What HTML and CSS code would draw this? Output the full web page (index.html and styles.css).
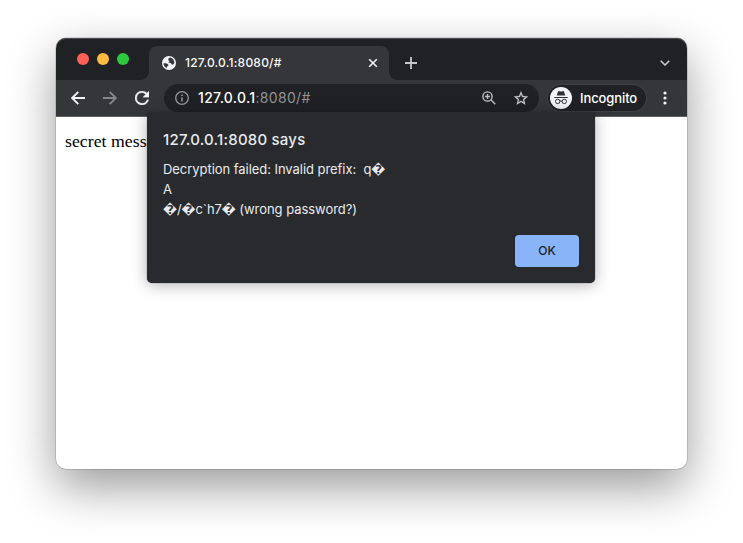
FILE: index.html
```html
<!DOCTYPE html>
<html lang="en">
<head>
<meta charset="utf-8">
<title>127.0.0.1:8080/#</title>
<link rel="stylesheet" href="styles.css">
</head>
<body>
<div class="window">
  <div class="tabstrip">
    <div class="lights"><i class="red"></i><i class="yellow"></i><i class="green"></i></div>
    <div class="tab">
      <svg class="globe" viewBox="0 0 14 14"><circle cx="7" cy="7" r="7" fill="#f4f5f6"/><path d="M8.3 1.6C7.2 2 6.1 2.8 6.2 3.7c.1.7 1 .6 1.2 1.2.2.8-1.1.9-1 1.6.2.7 1.6.2 2.5.7.8.5.5 1.4 1.4 1.5.8 0 1.400-.8 2-1.400C12.500 4.500 10.800 2.200 8.300 1.600zM1.500 7.200c1.500-.2 3.500 0 4.500 1 .9 1 .2 1.700-.6 2-.6.300-.5 1-.5 1.800C2.800 11.200 1.500 9.400 1.500 7.200z" fill="#35363a"/></svg>
      <span class="tab-title">127.0.0.1:8080/#</span>
      <svg class="close" viewBox="0 0 10 10"><path d="M1.200 1.200l7.600 7.600M8.800 1.200L1.200 8.800" stroke="#f1f3f4" stroke-width="1.600"/></svg>
    </div>
    <svg class="plus" viewBox="0 0 12 12"><path d="M6 0v12M0 6h12" stroke="#c5c7ca" stroke-width="1.800"/></svg>
    <svg class="chevron" viewBox="0 0 10 6"><path d="M.7.700L5 5 9.300.700" fill="none" stroke="#c5c7ca" stroke-width="1.600"/></svg>
  </div>
  <div class="toolbar">
    <svg class="back" viewBox="0 0 14 14"><path d="M14 7H1.200M7.300.800L1.100 7l6.200 6.200" fill="none" stroke="#f1f3f4" stroke-width="1.900"/></svg>
    <svg class="forward" viewBox="0 0 14 14"><path d="M0 7h12.800M6.700.800L12.900 7l-6.200 6.200" fill="none" stroke="#85868a" stroke-width="1.900"/></svg>
    <svg class="reload" viewBox="4 4 16 16"><path d="M17.650 6.350A7.958 7.958 0 0 0 12 4a8 8 0 1 0 7.730 10h-2.080A6 6 0 1 1 12 6c1.660 0 3.140.690 4.220 1.780L13 11h7V4l-2.350 2.350z" fill="#f1f3f4" stroke="#f1f3f4" stroke-width=".3"/></svg>
    <div class="omnibox">
      <svg class="info" viewBox="0 0 14 14"><circle cx="7" cy="7" r="6.300" fill="none" stroke="#96989c" stroke-width="1.300"/><path d="M7 6.200v4.200M7 3.500v1.500" stroke="#96989c" stroke-width="1.500"/></svg>
      <span class="url">127.0.0.1<span>:8080/#</span></span>
      <svg class="zoom" viewBox="0 0 14 14"><path d="M9 9l4.300 4.300M3 5.500h5M5.500 3v5" stroke="#bdc1c6" stroke-width="1.400"/><circle cx="5.500" cy="5.500" r="4.600" fill="none" stroke="#bdc1c6" stroke-width="1.400"/></svg>
      <svg class="star" viewBox="2 2 20 19"><path d="M22 9.240l-7.190-.620L12 2 9.190 8.630 2 9.240l5.460 4.730L5.820 21 12 17.270 18.180 21l-1.630-7.030L22 9.240zM12 15.400l-3.760 2.270 1-4.280-3.320-2.880 4.380-.380L12 6.100l1.710 4.040 4.380.380-3.320 2.880 1 4.280L12 15.400z" fill="#c8cacd" stroke="#c8cacd" stroke-width=".3"/></svg>
    </div>
    <div class="profile">
      <svg class="incognito" viewBox="0 0 22 22"><circle cx="11" cy="11" r="11" fill="#f1f3f4"/><path d="M8 4.700c.2-.6.600-.7 1.200-.5l1.800.4 1.800-.4c.6-.2 1-.1 1.200.5l1.300 3.700H6.700zM4.300 9.900h13.400v1.100H4.300z" fill="#303136"/><g fill="none" stroke="#303136" stroke-width="1"><circle cx="7.700" cy="14.400" r="2.200"/><circle cx="14.300" cy="14.400" r="2.200"/><path d="M9.900 14.200q1.100-.8 2.200 0"/></g></svg>
      <span>Incognito</span>
    </div>
    <svg class="menu" viewBox="0 0 4 14"><g fill="#f1f3f4"><circle cx="2" cy="2" r="1.600"/><circle cx="2" cy="7" r="1.600"/><circle cx="2" cy="12" r="1.600"/></g></svg>
  </div>
  <div class="page">secret message</div>
  <div class="dialog">
    <h1>127.0.0.1:8080 says</h1>
    <p><span class="line l1">Decryption failed: Invalid prefix:&nbsp; q<b>&#xFFFD;</b></span><span class="line">A</span><span class="line l3"><b>&#xFFFD;</b>/<b>&#xFFFD;</b>c`h7<b>&#xFFFD;</b> (wrong password?)</span></p>
    <button>OK</button>
  </div>
</div>
</body>
</html>
```
FILE: styles.css
```css
* { box-sizing: border-box; }
body {
  margin: 0;
  height: 543px;
  padding: 38px 56px 0;
  background: #fff;
  overflow: hidden;
  font-family: Inter, "Liberation Sans", sans-serif;
}
svg { display: block; flex: none; }
.window {
  position: relative;
  width: 631px;
  height: 431px;
  border-radius: 10px;
  background: #fff;
  box-shadow: 0 0 0 .5px rgba(0, 0, 0, .25), 0 18px 48px rgba(0, 0, 0, .4);
}
.tabstrip {
  display: flex;
  height: 42px;
  border-radius: 10px 10px 0 0;
  background: #202124;
  box-shadow: inset 0 1px 0 #4b4c4f;
}
.lights { display: flex; gap: 8px; padding: 15px 0 0 21px; width: 93px; }
.lights i { width: 12px; height: 12px; border-radius: 50%; }
.red { background: #fe5f57; }
.yellow { background: #febb40; }
.green { background: #2bc840; }
.tab {
  position: relative;
  display: flex;
  align-items: center;
  width: 240px;
  height: 34px;
  margin-top: 8px;
  padding: 0 11px 0 13px;
  border-radius: 8px 8px 0 0;
  background: #35363a;
}
.tab::before, .tab::after {
  content: "";
  position: absolute;
  bottom: 0;
  width: 8px;
  height: 8px;
}
.tab::before { left: -8px; background: radial-gradient(circle at 0 0, transparent 7.500px, #35363a 8px); }
.tab::after { right: -8px; background: radial-gradient(circle at 100% 0, transparent 7.500px, #35363a 8px); }
.globe { width: 14px; height: 14px; }
.tab-title { margin: -2px 0 0 9px; color: #f8f9fa; font-size: 12px; font-weight: 500; white-space: nowrap; letter-spacing: .22px; }
.close { width: 10px; height: 10px; margin-left: auto; }
.plus { width: 12px; height: 12px; margin: 19px 0 0 16px; }
.chevron { width: 10px; height: 6px; margin: 22px 17px 0 auto; }
.toolbar {
  display: flex;
  align-items: center;
  height: 37px;
  padding-left: 15px;
  background: #35363a;
  border-bottom: 1px solid #5f6063;
}
.back, .forward { width: 14px; height: 14px; }
.forward { margin-left: 18px; }
.reload { width: 14px; height: 14px; margin-left: 18px; }
.omnibox {
  display: flex;
  align-items: center;
  width: 375px;
  height: 28px;
  margin-left: 15px;
  padding: 0 11px;
  border-radius: 14px;
  background: #202124;
}
.info { width: 14px; height: 14px; }
.url { margin: -1px 0 0 9px; color: #fff; font-size: 14px; font-weight: 500; letter-spacing: .32px; }
.url span { color: #929498; font-weight: 400; }
.zoom { width: 14px; height: 14px; margin-left: auto; }
.star { width: 14px; height: 14px; margin-left: 18px; }
.profile {
  display: flex;
  align-items: center;
  width: 98px;
  height: 26px;
  margin-left: 9px;
  padding-left: 2px;
  border-radius: 13px;
  background: #202124;
  box-shadow: 0 0 0 1px #404145;
}
.profile span { margin-left: 8px; color: #fff; font-size: 13px; font-weight: 500; letter-spacing: -.1px; }
.incognito { width: 22px; height: 22px; }
.menu { width: 4px; height: 14px; margin-left: 17px; }
.page { padding: 14px 9px; color: #000; font: 17.700px/20px "Liberation Serif", serif; letter-spacing: .05px; }
.dialog {
  position: absolute;
  left: 91px;
  top: 74px;
  display: flex;
  flex-direction: column;
  width: 448px;
  height: 171px;
  padding: 18px 16px 16px;
  border-radius: 0 0 5px 5px;
  background: #292a2d;
  color: #e8eaed;
  box-shadow: 0 2px 16px rgba(0, 0, 0, .3), 0 0 1px #222;
}
.dialog h1 { margin: 0; font-size: 15px; line-height: 20px; font-weight: 500; letter-spacing: .22px; }
.dialog p { margin: 9px 0 0; font-size: 13px; line-height: 20px; }
.line { display: block; height: 20px; white-space: nowrap; }
.l1 { letter-spacing: -.05px; }
.l3 { letter-spacing: -.05px; }
.line b { font-family: "DejaVu Sans", sans-serif; font-size: 12.500px; line-height: 0; font-weight: 700; }
.dialog button {
  width: 64px;
  height: 32px;
  margin: auto 0 0 auto;
  padding: 0 0 1px;
  border: 0;
  border-radius: 4px;
  background: #8ab4f8;
  color: #202124;
  font: 500 12px Inter, sans-serif;
}
```
